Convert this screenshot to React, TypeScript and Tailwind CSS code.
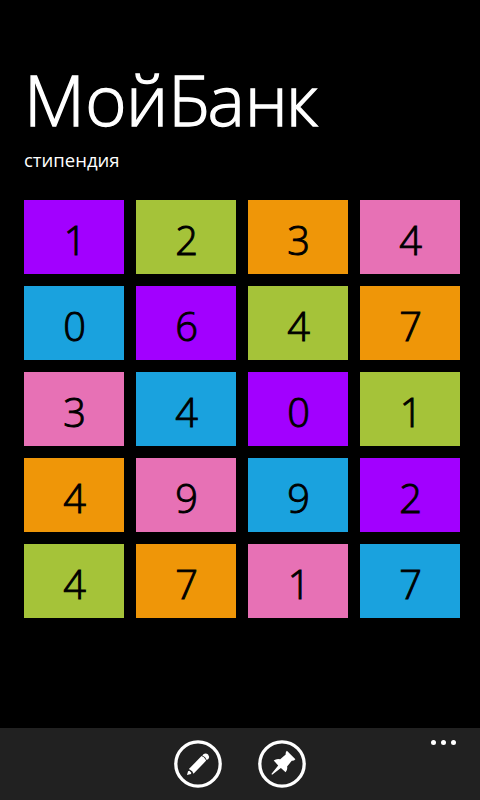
const C: Record<string, string> = { p: 'bg-[#a200ff]', g: 'bg-[#a5c339]', o: 'bg-[#ef9608]', k: 'bg-[#e771b5]', b: 'bg-[#1aa2de]' };
const cells = '1p 2g 3o 4k 0b 6p 4g 7o 3k 4b 0p 1g 4o 9k 9b 2p 4g 7o 1k 7b'.split(' ');
export default function App() {
  return (
    <div className="flex h-[800px] w-[480px] flex-col overflow-hidden bg-black font-['Open_Sans',sans-serif] text-white">
      <header className="h-[200px] pl-6 pt-[53px]">
        <h1 className="h-[92px] whitespace-nowrap text-[70.5px] font-light leading-[92px] tracking-[-1.1px] [-webkit-text-stroke:1.3px_white]">М<span className="ml-[1.5px]">о</span><span className="ml-[.5px]">й</span><span className="ml-px">Б</span><span className="ml-[-1.5px]">а</span><span className="ml-[1px]">н</span><span className="ml-[-1px]">к</span></h1>
        <p className="text-[18.5px] leading-[30px]">стипендия</p>
      </header>
      <main className="ml-6 grid w-[436px] grid-cols-4 gap-3">
        {cells.map((c, i) => (
          <div key={i} className={`flex h-[74px] items-center justify-center pl-px pt-1 text-[41px] font-light leading-[57px] text-black [-webkit-text-stroke:1px_black] ${C[c[1]]}`}>
            <span className={c[0] === '1' ? 'translate-x-[.5px] scale-x-[.97]' : 'scale-x-[.97]'}>{c[0]}</span>
          </div>
        ))}
      </main>
      <footer className="mt-auto grid h-[72px] grid-cols-[174px_48px_36px_48px_1fr] bg-[#212121] pt-3">
        <button aria-label="edit" className="col-start-2 size-12">
          <svg viewBox="0 0 48 48" className="size-12" fill="#fff">
            <circle cx="24" cy="24" r="22.2" fill="none" stroke="#fff" strokeWidth="3.3" />
            <path d="M13 35 L14 31.2 L15.4 30.8 L17.3 32.7 L17 34.1Z" />
            <path d="M14.9 29.1 L27.5 16 L29.9 17.2 L32.2 20.6 L19.5 33.8 L18.2 31.2 Z" />
            <path d="M28.3 15.4 L29.4 14.2 Q31.8 12.5 34.1 14.5 Q36 16.9 34.4 19 L32.7 20.1 Q31.7 16.6 28.3 15.4Z" />
          </svg>
        </button>
        <button aria-label="pin" className="col-start-4 size-12">
          <svg viewBox="0 0 48 48" className="size-12" fill="#fff">
            <circle cx="24" cy="24" r="22.2" fill="none" stroke="#fff" strokeWidth="3.3" />
            <path d="M28.9 10.8 L37.4 19.3 Q36 21 33.8 20.8 L29.1 26.4 Q29.8 29.5 27.6 32.3 L22.9 28 L14.1 34.7 L13.4 34 L20.2 25.4 L15.7 20.6 Q18.6 18.2 22.2 19.2 L27.7 14.6 Q27.3 12.2 28.9 10.8Z" />
          </svg>
        </button>
        <div className="col-start-5 flex h-[5px] gap-[5px] justify-self-end pr-6">
          <i className="size-[5px] rounded-full bg-white" /><i className="size-[5px] rounded-full bg-white" /><i className="size-[5px] rounded-full bg-white" />
        </div>
      </footer>
    </div>
  );
}
